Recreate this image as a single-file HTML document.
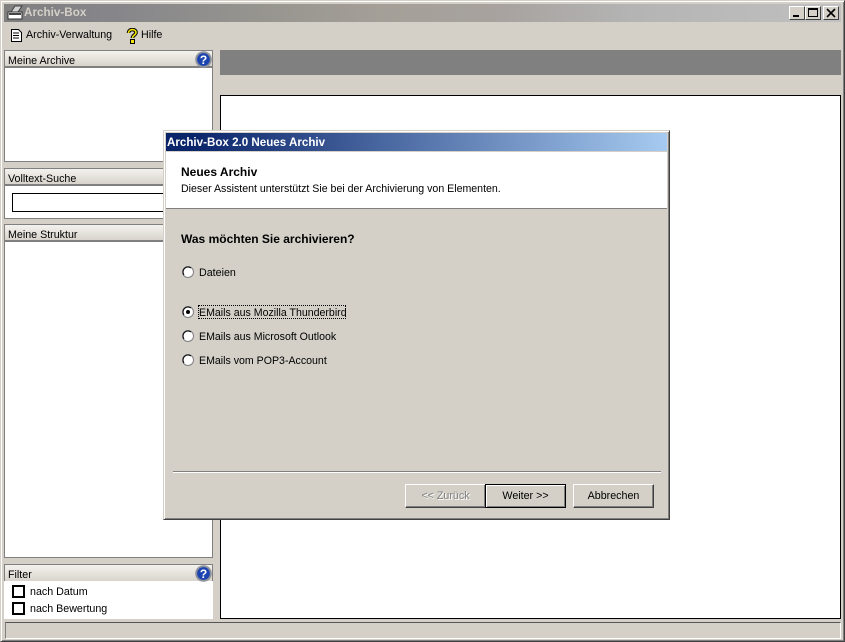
<!DOCTYPE html>
<html><head><meta charset="utf-8">
<style>
html,body{margin:0;padding:0}
body{width:845px;height:642px;position:relative;overflow:hidden;background:#d4d0c8;font-family:"Liberation Sans",sans-serif;font-size:10.7px;color:#000}
.a{position:absolute;box-sizing:border-box}
.t{position:absolute;white-space:nowrap;line-height:14px}
.hdr{position:absolute;box-sizing:border-box;left:4px;width:209px;height:18px;background:linear-gradient(#f4f2ee,#d8d4cc);border:1px solid #808080;border-bottom:2px solid #808080;}
.winbtn{position:absolute;box-sizing:border-box;top:6px;height:14px;width:16px;background:#d4d0c8;border:1px solid;border-color:#fff #404040 #404040 #fff}
.btn{position:absolute;box-sizing:border-box;top:484px;height:24px;background:#d4d0c8;border:1px solid;border-color:#fff #404040 #404040 #fff;box-shadow:inset -1px -1px 0 #808080;text-align:center;line-height:23px;font-size:10.7px}
.r{position:absolute;left:182px}
</style></head><body>
<!-- window border -->
<div class="a" style="left:0;top:0;width:845px;height:642px;border:1px solid;border-color:#d4d0c8 #404040 #404040 #d4d0c8;box-shadow:inset 1px 1px 0 #fff,inset -1px -1px 0 #808080"></div>
<!-- title bar -->
<div class="a" style="left:4px;top:4px;width:837px;height:18px;background:linear-gradient(90deg,#7f7f80 0,#85858a 12%,#96948f 30%,#a49f97 45%,#a8a3a0 60%,#b4b4b4 75%,#c0c0c0 100%)"></div>
<svg class="a" style="left:6px;top:5px" width="18" height="16" viewBox="0 0 18 16"><path d="M5 7 L9 1 L16 1 L12 7Z" fill="#d4d4d4" stroke="#404040" stroke-width="1"/><rect x="2" y="7" width="14" height="7" fill="#fff" stroke="#333"/><rect x="3" y="8" width="12" height="2" fill="#444"/></svg>
<div class="t" style="left:24px;top:6px;font-weight:bold;font-size:11.7px;color:#d4d0c8">Archiv-Box</div>
<div class="winbtn" style="left:789px"><div class="a" style="left:3px;top:8px;width:6px;height:2px;background:#000"></div></div>
<div class="winbtn" style="left:805px"><div class="a" style="left:2px;top:1px;width:10px;height:9px;border:1px solid #000;border-top-width:2px"></div></div>
<div class="winbtn" style="left:823px;width:16px"><svg class="a" style="left:2px;top:1px" width="10" height="10" viewBox="0 0 10 10"><path d="M1 1 L9 9 M9 1 L1 9" stroke="#000" stroke-width="1.6"/></svg></div>
<!-- menu -->
<svg class="a" style="left:10px;top:28px" width="13" height="15" viewBox="0 0 13 15"><path d="M1.5 1.5 H8.5 L11.5 4.5 V13.5 H1.5Z" fill="#fff" stroke="#000"/><path d="M3 5H9M3 7.5H9M3 10H9" stroke="#000"/></svg>
<div class="t" style="left:26px;top:28px">Archiv-Verwaltung</div>
<svg class="a" style="left:126px;top:28px" width="12" height="16" viewBox="0 0 12 16"><path d="M2.5 5 C2.5 0.5 10 0.5 10 4.5 C10 7 6.5 7 6.5 10" fill="none" stroke="#000" stroke-width="3.6"/><path d="M2.5 5 C2.5 0.5 10 0.5 10 4.5 C10 7 6.5 7 6.5 10" fill="none" stroke="#f2e400" stroke-width="1.6"/><rect x="4.5" y="11.5" width="4" height="4" fill="#f2e400" stroke="#000"/></svg>
<div class="t" style="left:141px;top:28px">Hilfe</div>
<!-- panel: Meine Archive -->
<div class="a" style="left:4px;top:67px;width:209px;height:95px;background:#fff;border:1px solid #808080;border-top:0"></div>
<div class="hdr" style="top:50px"></div>
<div class="t" style="left:8px;top:54px">Meine Archive</div>
<svg class="a" style="left:195px;top:51px" width="17" height="17" viewBox="0 0 17 17"><circle cx="8.5" cy="8.5" r="8.3" fill="#8f929c"/><circle cx="8.5" cy="8.5" r="6.4" fill="#1c44b0"/><text x="8.5" y="13" text-anchor="middle" font-family="Liberation Sans" font-weight="bold" font-size="12" fill="#fff">?</text></svg>
<!-- panel: Volltext -->
<div class="a" style="left:4px;top:184px;width:209px;height:35px;background:#fff;border:1px solid #808080;border-top:0"></div>
<div class="hdr" style="top:168px"></div>
<div class="t" style="left:8px;top:172px">Volltext-Suche</div>
<div class="a" style="left:12px;top:193px;width:190px;height:19px;background:#fff;border:1px solid #000"></div>
<!-- panel: Struktur -->
<div class="a" style="left:4px;top:241px;width:209px;height:317px;background:#fff;border:1px solid #808080;border-top:0"></div>
<div class="hdr" style="top:224px"></div>
<div class="t" style="left:8px;top:228px">Meine Struktur</div>
<!-- panel: Filter -->
<div class="a" style="left:4px;top:581px;width:209px;height:38px;background:#fff"></div>
<div class="hdr" style="top:564px;height:17px;border-bottom:0"></div>
<div class="t" style="left:8px;top:568px">Filter</div>
<svg class="a" style="left:195px;top:565px" width="17" height="17" viewBox="0 0 17 17"><circle cx="8.5" cy="8.5" r="8.3" fill="#8f929c"/><circle cx="8.5" cy="8.5" r="6.4" fill="#1c44b0"/><text x="8.5" y="13" text-anchor="middle" font-family="Liberation Sans" font-weight="bold" font-size="12" fill="#fff">?</text></svg>
<div class="a" style="left:12px;top:585px;width:13px;height:13px;border:2px solid #000;background:#fff"></div>
<div class="t" style="left:30px;top:585px">nach Datum</div>
<div class="a" style="left:12px;top:602px;width:13px;height:13px;border:2px solid #000;background:#fff"></div>
<div class="t" style="left:30px;top:602px">nach Bewertung</div>
<!-- right -->
<div class="a" style="left:220px;top:50px;width:621px;height:25px;background:#808080"></div>
<div class="a" style="left:220px;top:95px;width:621px;height:524px;background:#fff;border:1px solid #000"></div>
<!-- status -->
<div class="a" style="left:5px;top:622px;width:836px;height:17px;background:#d4d0c8;border:1px solid;border-color:#555 #fff #fff #808080"></div>
<!-- dialog -->
<div class="a" style="left:163px;top:130px;width:507px;height:390px;background:#d4d0c8;border:1px solid;border-color:#d4d0c8 #404040 #404040 #d4d0c8;box-shadow:inset 1px 1px 0 #fff,inset -1px -1px 0 #808080"></div>
<div class="a" style="left:166px;top:133px;width:501px;height:18px;background:linear-gradient(90deg,#0a246a 0,#0a246a 5%,#a6caf0 100%)"></div>
<div class="t" style="left:167px;top:136px;font-weight:bold;font-size:11.6px;color:#fff">Archiv-Box 2.0 Neues Archiv</div>
<div class="a" style="left:166px;top:151px;width:501px;height:58px;background:#fff;border-top:1px solid #d4d0c8;border-bottom:1px solid #808080"></div>
<div class="t" style="left:181px;top:165px;font-weight:bold;font-size:12px">Neues Archiv</div>
<div class="t" style="left:181px;top:182px;font-size:10.6px">Dieser Assistent unterstützt Sie bei der Archivierung von Elementen.</div>
<div class="t" style="left:181px;top:232px;font-weight:bold;font-size:12px">Was möchten Sie archivieren?</div>
<svg class="r" style="top:266px" width="12" height="12" viewBox="0 0 12 12"><circle cx="6" cy="6" r="5.5" fill="#fff" stroke="#808080"/><path d="M2 9 A5 5 0 0 1 9 2" fill="none" stroke="#000"/></svg>
<div class="t" style="left:199px;top:266px">Dateien</div>
<svg class="r" style="top:306px" width="12" height="12" viewBox="0 0 12 12"><circle cx="6" cy="6" r="5.5" fill="#fff" stroke="#808080"/><path d="M2 9 A5 5 0 0 1 9 2" fill="none" stroke="#000"/><circle cx="6" cy="6" r="2" fill="#000"/></svg>
<div class="a" style="left:198px;top:305px;width:148px;height:14px;border:1px dotted #000"></div>
<div class="t" style="left:199px;top:306px;font-size:10.6px">EMails aus Mozilla Thunderbird</div>
<svg class="r" style="top:330px" width="12" height="12" viewBox="0 0 12 12"><circle cx="6" cy="6" r="5.5" fill="#fff" stroke="#808080"/><path d="M2 9 A5 5 0 0 1 9 2" fill="none" stroke="#000"/></svg>
<div class="t" style="left:199px;top:330px;font-size:10.6px">EMails aus Microsoft Outlook</div>
<svg class="r" style="top:354px" width="12" height="12" viewBox="0 0 12 12"><circle cx="6" cy="6" r="5.5" fill="#fff" stroke="#808080"/><path d="M2 9 A5 5 0 0 1 9 2" fill="none" stroke="#000"/></svg>
<div class="t" style="left:199px;top:354px;font-size:10.6px">EMails vom POP3-Account</div>
<div class="a" style="left:173px;top:471px;width:488px;height:2px;background:#808080;border-bottom:1px solid #fff"></div>
<div class="btn" style="left:405px;width:81px;color:#808080;text-shadow:1px 1px 0 #fff">&lt;&lt; Zurück</div>
<div class="btn" style="left:485px;width:81px;border:1px solid #000;box-shadow:inset 1px 1px 0 #fff,inset -1px -1px 0 #808080">Weiter &gt;&gt;</div>
<div class="btn" style="left:573px;width:81px">Abbrechen</div>
</body></html>
